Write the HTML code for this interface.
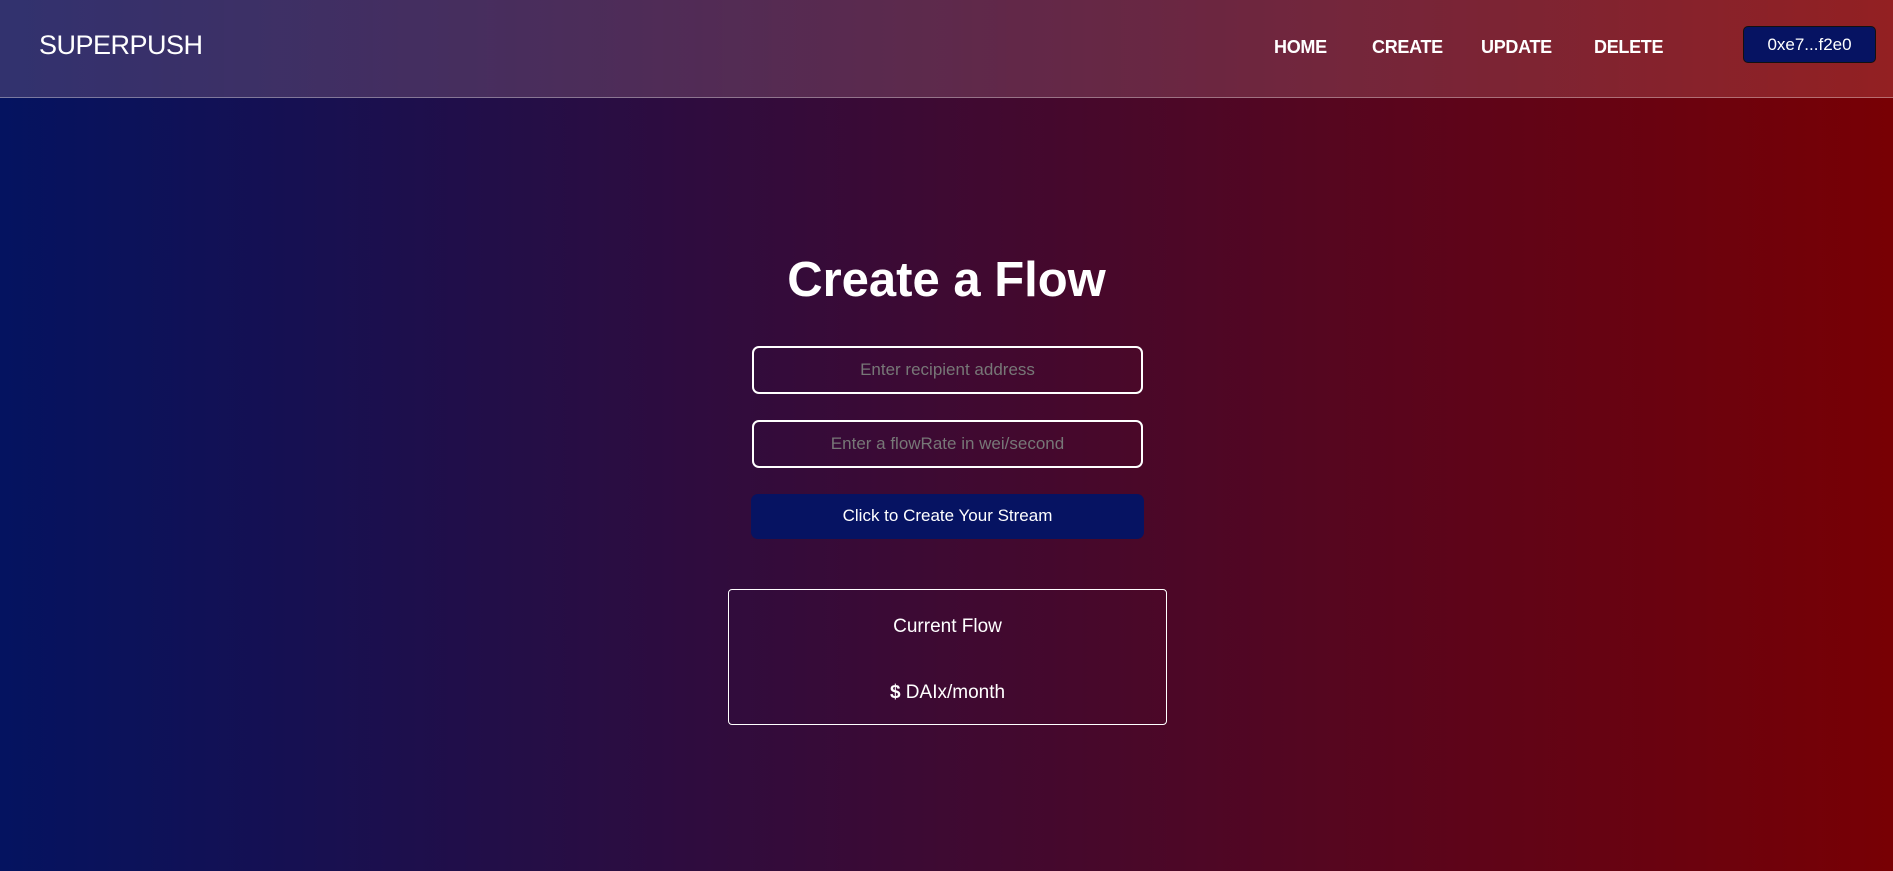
<!DOCTYPE html>
<html><head><meta charset="utf-8"><style>
*{margin:0;padding:0;box-sizing:border-box}
body{width:1893px;height:871px;overflow:hidden;background:linear-gradient(to right,#041360,#780004);font-family:"Liberation Sans","DejaVu Sans",sans-serif;color:#fff;position:relative}
.hdr{position:absolute;left:0;top:0;width:1893px;height:98px;background:linear-gradient(to right,rgba(80,70,120,0.6),rgba(180,70,70,0.45));border-bottom:1px solid rgba(255,255,255,0.35)}
.logo{position:absolute;left:39px;top:30px;font-size:27px;letter-spacing:-0.5px}
.nav{position:absolute;top:37px;font-size:18px;font-weight:bold;letter-spacing:-0.3px}
.wal{position:absolute;left:1743px;top:26px;width:133px;height:37px;background:#061362;border:1px solid #111;border-radius:5px;font-size:17px;text-align:center;line-height:35px}
h1{position:absolute;left:0;width:1893px;text-align:center;top:252px;font-size:49px;font-weight:bold}
.inp{position:absolute;left:752px;width:391px;height:48px;border:2px solid #fff;border-radius:7px;color:#777;font-size:17px;text-align:center;line-height:44px}
.btn{position:absolute;left:751px;top:494px;width:393px;height:45px;background:#061362;border-radius:7px;font-size:17px;text-align:center;line-height:43px}
.box{position:absolute;left:728px;top:589px;width:439px;height:136px;border:1px solid #fff;border-radius:4px;text-align:center;font-size:19px}
</style></head><body>
<div class="hdr">
<div class="logo">SUPERPUSH</div>
<div class="nav" style="left:1274px">HOME</div>
<div class="nav" style="left:1372px">CREATE</div>
<div class="nav" style="left:1481px">UPDATE</div>
<div class="nav" style="left:1594px">DELETE</div>
<div class="wal">0xe7...f2e0</div>
</div>
<h1>Create a Flow</h1>
<div class="inp" style="top:346px">Enter recipient address</div>
<div class="inp" style="top:420px">Enter a flowRate in wei/second</div>
<div class="btn">Click to Create Your Stream</div>
<div class="box">
<div style="position:absolute;left:0;right:0;top:26px">Current Flow</div>
<div style="position:absolute;left:0;right:0;top:92px"><b>$</b> DAIx/month</div>
</div>
</body></html>
